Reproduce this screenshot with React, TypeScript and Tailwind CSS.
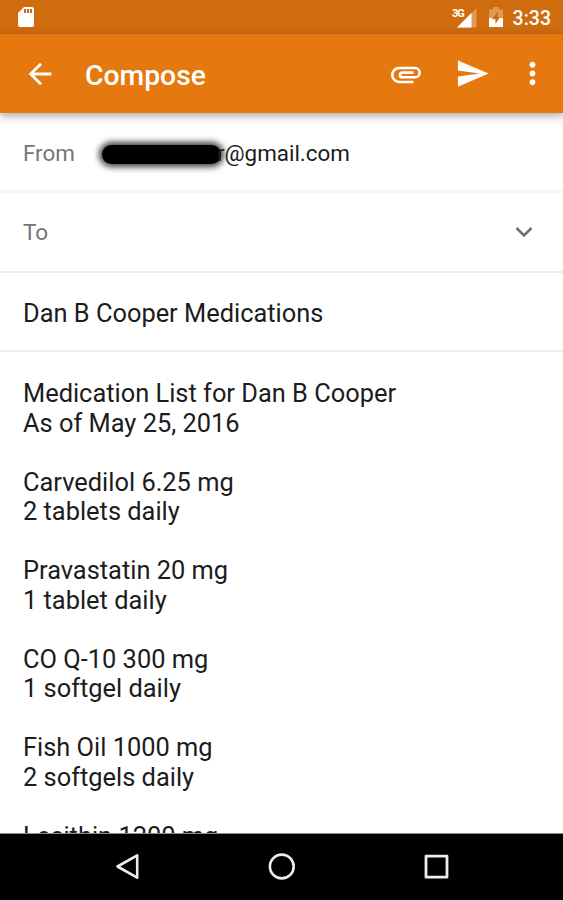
import type { ReactNode } from 'react'
import { MdArrowBack, MdMoreVert, MdSdCard, MdSend } from 'react-icons/md'

type Medication = {
  name: string
  dose: string
}

const MEDICATIONS: Medication[] = [
  { name: 'Carvedilol 6.25 mg', dose: '2 tablets daily' },
  { name: 'Pravastatin 20 mg', dose: '1 tablet daily' },
  { name: 'CO Q-10 300 mg', dose: '1 softgel daily' },
  { name: 'Fish Oil 1000 mg', dose: '2 softgels daily' },
  { name: 'Lecithin 1200 mg', dose: '' },
]

function SignalIcon() {
  return (
    <svg width="26" height="22" viewBox="0 0 26 22">
      <path d="M5 21.5 L24.5 2 V21.5 Z" fill="#e09a57" />
      <path d="M5 21.5 L19.5 7 V21.5 Z" fill="#fff" />
      <text x="0" y="10.5" fill="#fff" fontSize="11" fontWeight="700" letterSpacing="-1">3G</text>
    </svg>
  )
}

function BatteryIcon() {
  return (
    <svg width="14" height="20" viewBox="0 0 14 20">
      <path d="M4 0 H10 V2.5 H14 V11 H0 V2.5 H4 Z" fill="#e09a57" />
      <path d="M0 11 H14 V20 H0 Z" fill="#fff" />
      <path d="M8.8 4.5 L3 12.2 H6.4 V17 L11 10 H8.8 Z" fill="#ce6c0e" />
    </svg>
  )
}

function ClipIcon() {
  return (
    <svg width="36" height="36" viewBox="0 0 24 24" fill="none" stroke="#fff" strokeWidth="1.75">
      <path d="M17 17.3 H7.5 a4.65 4.65 0 0 1 0 -9.3 H18 a3.1 3.1 0 0 1 0 6.2 H9.5 a1.55 1.55 0 0 1 0 -3.1 H17" />
    </svg>
  )
}

function StatusBar() {
  return (
    <div className="flex h-[34px] shrink-0 items-center bg-[#ce6c0e] pl-3.5 pr-3 text-white">
      <MdSdCard size={24} />
      <div className="ml-auto flex items-center">
        <SignalIcon />
        <div className="ml-[11px]"><BatteryIcon /></div>
        <span className="ml-2.5 pt-1 text-[19.5px] font-medium leading-none">3:33</span>
      </div>
    </div>
  )
}

function AppBar() {
  return (
    <header className="relative flex h-[79px] shrink-0 items-center bg-[#e5790f] pl-[23px] text-white shadow-[0_3px_8px_rgba(0,0,0,0.35)]">
      <MdArrowBack size={34} />
      <h1 className="ml-[28px] pt-1.5 text-[28.3px] font-medium leading-none">Compose</h1>
      <div className="ml-auto flex items-center">
        <ClipIcon />
        <MdSend size={35} className="ml-[31px]" />
        <MdMoreVert size={35} className="ml-[25px] mr-[13px]" />
      </div>
    </header>
  )
}

function Row({ className, children }: { className: string; children: ReactNode }) {
  return <div className={`flex shrink-0 items-center px-[23px] ${className}`}>{children}</div>
}

function NavBar() {
  return (
    <nav className="flex h-[66px] shrink-0 items-center justify-center gap-[126px] bg-black">
      <svg width="28" height="28" viewBox="0 0 28 28" fill="none" stroke="#eee" strokeWidth="2.6" strokeLinejoin="round">
        <path d="M3.5 13.5 L23.2 2.3 V24.7 Z" />
      </svg>
      <svg width="28" height="28" viewBox="0 0 28 28" fill="none" stroke="#eee" strokeWidth="2.6">
        <circle cx="13.8" cy="13.5" r="11.9" />
      </svg>
      <svg width="28" height="28" viewBox="0 0 28 28" fill="none" stroke="#eee" strokeWidth="2.8" strokeLinejoin="round">
        <rect x="4" y="3.2" width="21" height="21" />
      </svg>
    </nav>
  )
}

export default function App() {
  return (
    <div className="flex h-[900px] w-[563px] flex-col overflow-hidden bg-white font-[Roboto,sans-serif] text-[#1c1c1c]">
      <StatusBar />
      <AppBar />

      <Row className="h-[80px] border-b-3 border-[#f6f6f6] pt-[4px] text-[22.4px]">
        <span className="text-[#757575]">From</span>
        <div className="ml-[27px] mt-[2px] h-[19px] w-[119px] rounded-full bg-black shadow-[0_0_6px_3px_rgba(0,0,0,0.75)]" />
        <span className="-ml-[4px] text-[#1c1c1c]">r@gmail.com</span>
      </Row>

      <Row className="h-[80px] border-b-2 border-[#ececec] pt-[2px] text-[22.5px]">
        <span className="text-[#757575]">To</span>
        <svg className="ml-auto mr-[7px]" width="18" height="12" viewBox="0 0 18 12" fill="none" stroke="#6e6e6e" strokeWidth="2.6">
          <path d="M1.5 1 L9 8.5 L16.5 1" />
        </svg>
      </Row>

      <Row className="h-[79px] border-b-2 border-[#ececec] pt-[3px] text-[25.4px]">
        <span>Dan B Cooper Medications</span>
      </Row>

      <main className="min-h-0 flex-1 overflow-hidden border-b border-[#8a8a8a] px-[23px] pt-[27px] text-[25.4px] leading-[29.5px]">
        <p>Medication List for Dan B Cooper</p>
        <p>As of May 25, 2016</p>
        {MEDICATIONS.map(med => (
          <div key={med.name} className="mt-[29.5px]">
            <p>{med.name}</p>
            <p>{med.dose}</p>
          </div>
        ))}
      </main>

      <NavBar />
    </div>
  )
}
